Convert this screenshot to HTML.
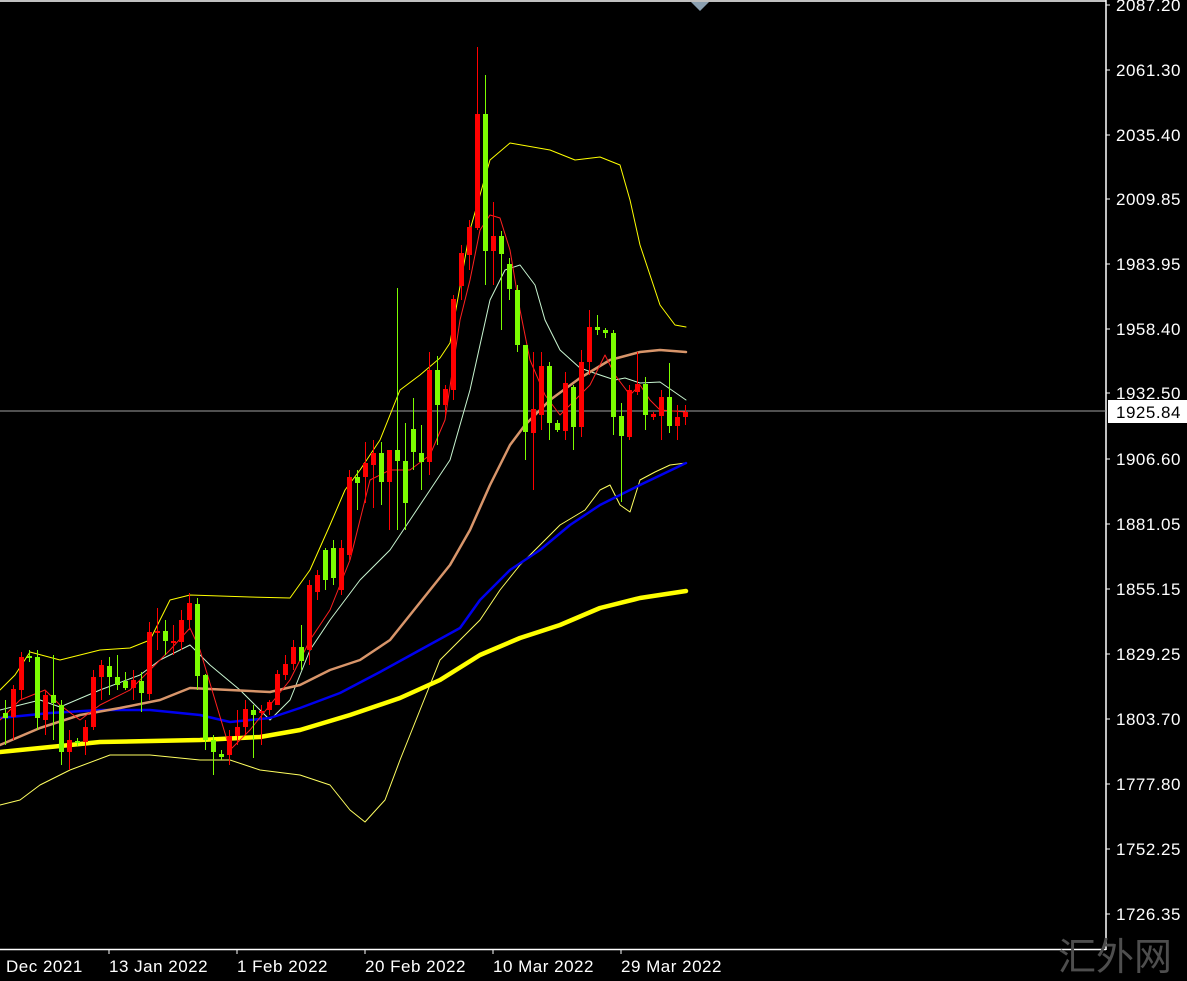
<!DOCTYPE html>
<html><head><meta charset="utf-8"><style>
html,body{margin:0;padding:0;background:#000;width:1187px;height:981px;overflow:hidden}
svg{display:block}
text{font-family:"Liberation Sans","Noto Sans CJK SC",sans-serif}
</style></head><body>
<svg width="1187" height="981" viewBox="0 0 1187 981" xmlns="http://www.w3.org/2000/svg">
<rect width="1187" height="981" fill="#000"/>
<line x1="0" y1="1" x2="1106" y2="1" stroke="#fff" stroke-width="1.5"/>
<line x1="1106" y1="0" x2="1106" y2="950" stroke="#fff" stroke-width="1.5"/>
<line x1="0" y1="949.5" x2="1106" y2="949.5" stroke="#fff" stroke-width="1.5"/>
<polygon points="691,2 709,2 700,11" fill="#8a9fb0"/>
<line x1="0" y1="411" x2="1106" y2="411" stroke="#a0a0a0" stroke-width="1"/>
<g fill="none" stroke-linejoin="round" stroke-linecap="round">
<polyline stroke="#ffff00" stroke-width="1" points="0,690 15,675 30,652 60,660 100,650 130,648 150,640 170,600 190,595 250,597 290,598 310,570 330,525 345,490 360,470 380,440 400,390 420,375 440,358 450,343 470,230 490,160 510,143 550,150 575,160 600,157 620,165 630,200 640,245 660,305 675,325 686,327"/>
<polyline stroke="#ffff60" stroke-width="1" points="0,805 20,800 40,785 70,770 110,755 150,755 200,760 230,760 260,770 300,775 330,785 350,810 365,822 385,800 400,760 420,710 440,660 460,640 480,620 500,590 520,565 560,525 585,510 600,490 610,485 620,505 630,512 640,480 655,472 670,465 686,463"/>
<polyline stroke="#c8f5d0" stroke-width="1" points="0,710 40,700 60,707 100,690 140,675 160,660 190,645 210,665 240,690 270,720 290,700 310,650 330,620 360,580 390,550 410,520 430,490 450,460 470,390 490,300 505,270 520,265 535,285 545,320 560,350 580,368 600,375 615,380 625,378 640,383 660,382 686,400"/>
<polyline stroke="#0000ee" stroke-width="2.5" points="0,718 50,713 100,710 150,710 200,715 230,722 270,718 300,708 340,693 380,672 420,650 460,628 480,600 510,570 540,550 570,525 600,505 640,485 686,463"/>
<polyline stroke="#ffff00" stroke-width="4.5" points="0,752 100,742 200,740 260,737 300,730 350,715 400,698 440,680 480,655 520,638 560,625 600,608 640,598 686,591"/>
<polyline stroke="#d8956a" stroke-width="2.5" points="0,745 40,728 80,715 120,708 160,700 190,688 230,690 270,692 300,685 330,670 360,660 390,640 410,615 430,590 450,565 470,530 490,485 510,445 525,425 550,400 580,378 610,360 640,352 660,350 686,352"/>
<polyline stroke="#ff2020" stroke-width="1" points="0,720 20,700 45,690 60,705 80,720 100,705 130,690 150,670 170,650 190,628 200,650 215,700 230,750 250,730 270,705 290,680 310,640 330,610 350,560 370,480 390,470 410,470 430,455 445,420 460,320 470,280 480,230 490,215 500,218 510,250 520,310 530,360 545,395 560,415 575,400 590,385 605,355 615,375 630,395 640,385 650,400 660,410 686,412"/>
</g>
<g stroke="#7cfc00" fill="#7cfc00">
<line x1="5.5" y1="700" x2="5.5" y2="745"/><rect x="3" y="713" width="5" height="5" stroke="none"/>
<line x1="29.5" y1="650" x2="29.5" y2="662"/><rect x="27" y="656" width="5" height="2" stroke="none"/>
<line x1="37.5" y1="650" x2="37.5" y2="730"/><rect x="35" y="657" width="5" height="61" stroke="none"/>
<line x1="53.5" y1="655" x2="53.5" y2="740"/><rect x="51" y="695" width="5" height="8" stroke="none"/>
<line x1="61.5" y1="700" x2="61.5" y2="765"/><rect x="59" y="705" width="5" height="47" stroke="none"/>
<line x1="77.5" y1="738" x2="77.5" y2="746"/><rect x="75" y="741" width="5" height="2" stroke="none"/>
<line x1="109.5" y1="657" x2="109.5" y2="695"/><rect x="107" y="666" width="5" height="11" stroke="none"/>
<line x1="117.5" y1="655" x2="117.5" y2="690"/><rect x="115" y="677" width="5" height="8" stroke="none"/>
<line x1="125.5" y1="672" x2="125.5" y2="690"/><rect x="123" y="681" width="5" height="7" stroke="none"/>
<line x1="141.5" y1="672" x2="141.5" y2="712"/><rect x="139" y="681" width="5" height="12" stroke="none"/>
<line x1="165.5" y1="620" x2="165.5" y2="655"/><rect x="163" y="631" width="5" height="10" stroke="none"/>
<line x1="197.5" y1="598" x2="197.5" y2="690"/><rect x="195" y="604" width="5" height="72" stroke="none"/>
<line x1="205.5" y1="674" x2="205.5" y2="750"/><rect x="203" y="675" width="5" height="65" stroke="none"/>
<line x1="213.5" y1="735" x2="213.5" y2="775"/><rect x="211" y="740" width="5" height="12" stroke="none"/>
<line x1="221.5" y1="750" x2="221.5" y2="760"/><rect x="219" y="754" width="5" height="3" stroke="none"/>
<line x1="253.5" y1="705" x2="253.5" y2="758"/><rect x="251" y="710" width="5" height="5" stroke="none"/>
<line x1="301.5" y1="625" x2="301.5" y2="670"/><rect x="299" y="647" width="5" height="14" stroke="none"/>
<line x1="325.5" y1="548" x2="325.5" y2="590"/><rect x="323" y="550" width="5" height="30" stroke="none"/>
<line x1="333.5" y1="540" x2="333.5" y2="585"/><rect x="331" y="548" width="5" height="30" stroke="none"/>
<line x1="357.5" y1="470" x2="357.5" y2="510"/><rect x="355" y="477" width="5" height="6" stroke="none"/>
<line x1="381.5" y1="442" x2="381.5" y2="505"/><rect x="379" y="453" width="5" height="29" stroke="none"/>
<line x1="397.5" y1="288" x2="397.5" y2="530"/><rect x="395" y="450" width="5" height="11" stroke="none"/>
<line x1="405.5" y1="423" x2="405.5" y2="530"/><rect x="403" y="461" width="5" height="42" stroke="none"/>
<line x1="413.5" y1="398" x2="413.5" y2="470"/><rect x="411" y="429" width="5" height="23" stroke="none"/>
<line x1="421.5" y1="425" x2="421.5" y2="490"/><rect x="419" y="453" width="5" height="9" stroke="none"/>
<line x1="437.5" y1="356" x2="437.5" y2="445"/><rect x="435" y="370" width="5" height="35" stroke="none"/>
<line x1="485.5" y1="75" x2="485.5" y2="285"/><rect x="483" y="114" width="5" height="137" stroke="none"/>
<line x1="501.5" y1="231" x2="501.5" y2="330"/><rect x="499" y="236" width="5" height="18" stroke="none"/>
<line x1="509.5" y1="258" x2="509.5" y2="300"/><rect x="507" y="264" width="5" height="25" stroke="none"/>
<line x1="517.5" y1="285" x2="517.5" y2="352"/><rect x="515" y="290" width="5" height="55" stroke="none"/>
<line x1="525.5" y1="345" x2="525.5" y2="460"/><rect x="523" y="345" width="5" height="87" stroke="none"/>
<line x1="549.5" y1="362" x2="549.5" y2="440"/><rect x="547" y="366" width="5" height="57" stroke="none"/>
<line x1="557.5" y1="420" x2="557.5" y2="432"/><rect x="555" y="423" width="5" height="7" stroke="none"/>
<line x1="573.5" y1="385" x2="573.5" y2="450"/><rect x="571" y="387" width="5" height="40" stroke="none"/>
<line x1="597.5" y1="315" x2="597.5" y2="335"/><rect x="595" y="327" width="5" height="3" stroke="none"/>
<line x1="605.5" y1="328" x2="605.5" y2="338"/><rect x="603" y="330" width="5" height="3" stroke="none"/>
<line x1="613.5" y1="330" x2="613.5" y2="435"/><rect x="611" y="333" width="5" height="84" stroke="none"/>
<line x1="621.5" y1="403" x2="621.5" y2="502"/><rect x="619" y="416" width="5" height="20" stroke="none"/>
<line x1="645.5" y1="377" x2="645.5" y2="430"/><rect x="643" y="384" width="5" height="31" stroke="none"/>
<line x1="669.5" y1="363" x2="669.5" y2="433"/><rect x="667" y="397" width="5" height="29" stroke="none"/>
</g>
<g stroke="#ff0000" fill="#ff0000">
<line x1="13.5" y1="685" x2="13.5" y2="740"/><rect x="11" y="689" width="5" height="28" stroke="none"/>
<line x1="21.5" y1="652" x2="21.5" y2="700"/><rect x="19" y="657" width="5" height="33" stroke="none"/>
<line x1="45.5" y1="690" x2="45.5" y2="735"/><rect x="43" y="695" width="5" height="25" stroke="none"/>
<line x1="69.5" y1="730" x2="69.5" y2="770"/><rect x="67" y="740" width="5" height="12" stroke="none"/>
<line x1="85.5" y1="720" x2="85.5" y2="755"/><rect x="83" y="727" width="5" height="15" stroke="none"/>
<line x1="93.5" y1="670" x2="93.5" y2="730"/><rect x="91" y="677" width="5" height="50" stroke="none"/>
<line x1="101.5" y1="660" x2="101.5" y2="700"/><rect x="99" y="665" width="5" height="12" stroke="none"/>
<line x1="133.5" y1="670" x2="133.5" y2="700"/><rect x="131" y="680" width="5" height="8" stroke="none"/>
<line x1="149.5" y1="622" x2="149.5" y2="700"/><rect x="147" y="632" width="5" height="62" stroke="none"/>
<line x1="157.5" y1="608" x2="157.5" y2="650"/><rect x="155" y="631" width="5" height="2" stroke="none"/>
<line x1="173.5" y1="625" x2="173.5" y2="655"/><rect x="171" y="641" width="5" height="2" stroke="none"/>
<line x1="181.5" y1="610" x2="181.5" y2="650"/><rect x="179" y="620" width="5" height="22" stroke="none"/>
<line x1="189.5" y1="593" x2="189.5" y2="630"/><rect x="187" y="603" width="5" height="17" stroke="none"/>
<line x1="229.5" y1="730" x2="229.5" y2="765"/><rect x="227" y="736" width="5" height="19" stroke="none"/>
<line x1="237.5" y1="710" x2="237.5" y2="745"/><rect x="235" y="727" width="5" height="9" stroke="none"/>
<line x1="245.5" y1="700" x2="245.5" y2="735"/><rect x="243" y="709" width="5" height="18" stroke="none"/>
<line x1="261.5" y1="705" x2="261.5" y2="745"/><rect x="259" y="711" width="5" height="2" stroke="none"/>
<line x1="269.5" y1="700" x2="269.5" y2="715"/><rect x="267" y="702" width="5" height="8" stroke="none"/>
<line x1="277.5" y1="670" x2="277.5" y2="705"/><rect x="275" y="674" width="5" height="31" stroke="none"/>
<line x1="285.5" y1="655" x2="285.5" y2="680"/><rect x="283" y="664" width="5" height="11" stroke="none"/>
<line x1="293.5" y1="640" x2="293.5" y2="670"/><rect x="291" y="647" width="5" height="17" stroke="none"/>
<line x1="309.5" y1="580" x2="309.5" y2="665"/><rect x="307" y="585" width="5" height="65" stroke="none"/>
<line x1="317.5" y1="570" x2="317.5" y2="600"/><rect x="315" y="575" width="5" height="17" stroke="none"/>
<line x1="341.5" y1="540" x2="341.5" y2="595"/><rect x="339" y="548" width="5" height="42" stroke="none"/>
<line x1="349.5" y1="470" x2="349.5" y2="560"/><rect x="347" y="477" width="5" height="78" stroke="none"/>
<line x1="365.5" y1="442" x2="365.5" y2="503"/><rect x="363" y="463" width="5" height="14" stroke="none"/>
<line x1="373.5" y1="440" x2="373.5" y2="508"/><rect x="371" y="453" width="5" height="12" stroke="none"/>
<line x1="389.5" y1="450" x2="389.5" y2="530"/><rect x="387" y="450" width="5" height="32" stroke="none"/>
<line x1="429.5" y1="352" x2="429.5" y2="475"/><rect x="427" y="370" width="5" height="92" stroke="none"/>
<line x1="445.5" y1="385" x2="445.5" y2="415"/><rect x="443" y="389" width="5" height="16" stroke="none"/>
<line x1="453.5" y1="295" x2="453.5" y2="400"/><rect x="451" y="299" width="5" height="91" stroke="none"/>
<line x1="461.5" y1="245" x2="461.5" y2="300"/><rect x="459" y="253" width="5" height="33" stroke="none"/>
<line x1="469.5" y1="220" x2="469.5" y2="270"/><rect x="467" y="227" width="5" height="28" stroke="none"/>
<line x1="477.5" y1="47" x2="477.5" y2="230"/><rect x="475" y="114" width="5" height="114" stroke="none"/>
<line x1="493.5" y1="202" x2="493.5" y2="285"/><rect x="491" y="236" width="5" height="15" stroke="none"/>
<line x1="533.5" y1="352" x2="533.5" y2="490"/><rect x="531" y="409" width="5" height="24" stroke="none"/>
<line x1="541.5" y1="352" x2="541.5" y2="430"/><rect x="539" y="366" width="5" height="49" stroke="none"/>
<line x1="565.5" y1="372" x2="565.5" y2="440"/><rect x="563" y="383" width="5" height="48" stroke="none"/>
<line x1="581.5" y1="350" x2="581.5" y2="437"/><rect x="579" y="362" width="5" height="65" stroke="none"/>
<line x1="589.5" y1="310" x2="589.5" y2="375"/><rect x="587" y="327" width="5" height="35" stroke="none"/>
<line x1="629.5" y1="385" x2="629.5" y2="440"/><rect x="627" y="390" width="5" height="47" stroke="none"/>
<line x1="637.5" y1="352" x2="637.5" y2="395"/><rect x="635" y="384" width="5" height="8" stroke="none"/>
<line x1="653.5" y1="412" x2="653.5" y2="420"/><rect x="651" y="414" width="5" height="3" stroke="none"/>
<line x1="661.5" y1="390" x2="661.5" y2="440"/><rect x="659" y="397" width="5" height="19" stroke="none"/>
<line x1="677.5" y1="405" x2="677.5" y2="440"/><rect x="675" y="417" width="5" height="9" stroke="none"/>
<line x1="685.5" y1="405" x2="685.5" y2="425"/><rect x="683" y="412" width="5" height="5" stroke="none"/>
</g>
<g stroke="#fff" stroke-width="1">
<line x1="1106" y1="5" x2="1110" y2="5"/><line x1="1106" y1="70" x2="1110" y2="70"/><line x1="1106" y1="135" x2="1110" y2="135"/>
<line x1="1106" y1="199" x2="1110" y2="199"/><line x1="1106" y1="264" x2="1110" y2="264"/><line x1="1106" y1="329" x2="1110" y2="329"/>
<line x1="1106" y1="393" x2="1110" y2="393"/><line x1="1106" y1="459" x2="1110" y2="459"/><line x1="1106" y1="524" x2="1110" y2="524"/>
<line x1="1106" y1="589" x2="1110" y2="589"/><line x1="1106" y1="654" x2="1110" y2="654"/><line x1="1106" y1="719" x2="1110" y2="719"/>
<line x1="1106" y1="784" x2="1110" y2="784"/><line x1="1106" y1="849" x2="1110" y2="849"/><line x1="1106" y1="914" x2="1110" y2="914"/>
</g>
<g fill="#fff" font-size="17" letter-spacing="0.5">
<text x="1116" y="11">2087.20</text>
<text x="1116" y="76">2061.30</text>
<text x="1116" y="141">2035.40</text>
<text x="1116" y="205">2009.85</text>
<text x="1116" y="270">1983.95</text>
<text x="1116" y="335">1958.40</text>
<text x="1116" y="399">1932.50</text>
<text x="1116" y="465">1906.60</text>
<text x="1116" y="530">1881.05</text>
<text x="1116" y="595">1855.15</text>
<text x="1116" y="660">1829.25</text>
<text x="1116" y="725">1803.70</text>
<text x="1116" y="790">1777.80</text>
<text x="1116" y="855">1752.25</text>
<text x="1116" y="920">1726.35</text>
</g>
<rect x="1108" y="400" width="79" height="23" fill="#fff"/>
<text x="1116" y="418" font-size="17" letter-spacing="0.5" fill="#000">1925.84</text>
<g stroke="#fff"><line x1="109" y1="949" x2="109" y2="954"/><line x1="237" y1="949" x2="237" y2="954"/><line x1="365" y1="949" x2="365" y2="954"/><line x1="493" y1="949" x2="493" y2="954"/><line x1="621" y1="949" x2="621" y2="954"/></g>
<g fill="#fff" font-size="17" letter-spacing="0.5">
<text x="6" y="972">Dec 2021</text>
<text x="109" y="972">13 Jan 2022</text>
<text x="237" y="972">1 Feb 2022</text>
<text x="365" y="972">20 Feb 2022</text>
<text x="493" y="972">10 Mar 2022</text>
<text x="621" y="972">29 Mar 2022</text>
</g>
<text x="1058" y="970" font-size="38" fill="#4e4e4e" font-family="'Noto Serif CJK SC','Noto Sans CJK SC',serif">汇外网</text>
</svg>
</body></html>
